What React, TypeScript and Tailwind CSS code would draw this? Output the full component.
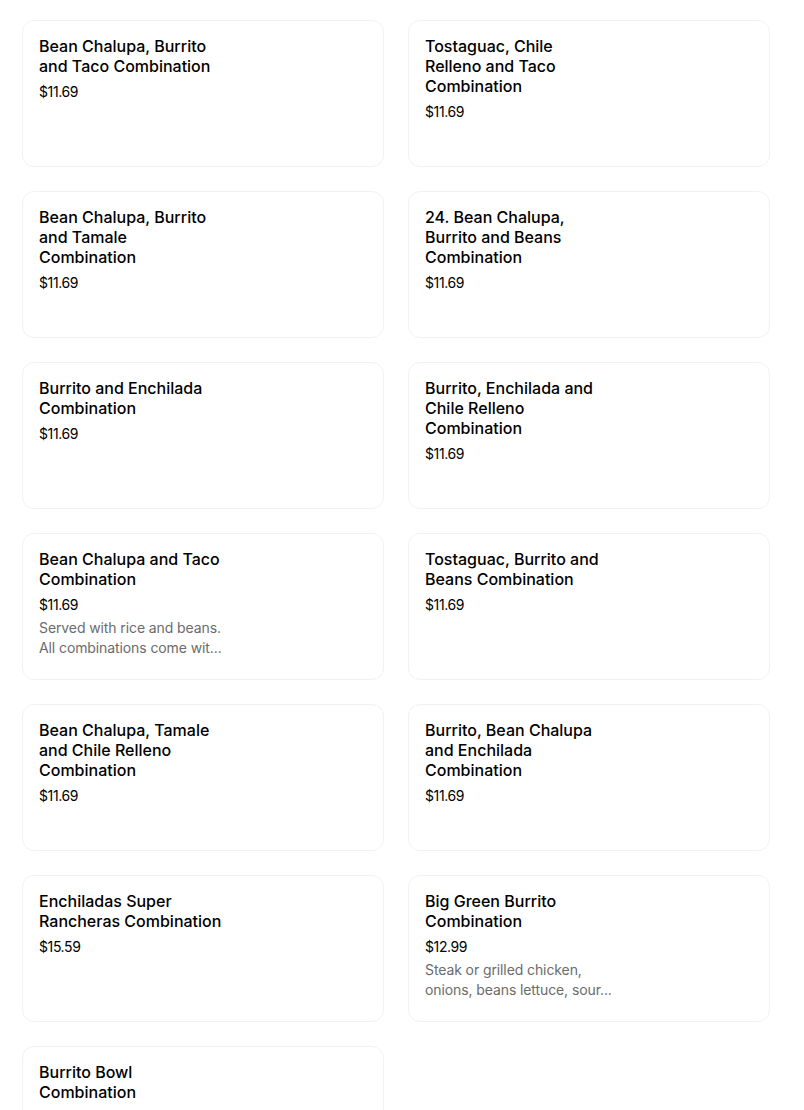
type Item = {
  lines: string[]
  price: string
  desc?: string[]
}

const items: Item[] = [
  { lines: ['Bean Chalupa, Burrito', 'and Taco Combination'], price: '$11.69' },
  { lines: ['Tostaguac, Chile', 'Relleno and Taco', 'Combination'], price: '$11.69' },
  { lines: ['Bean Chalupa, Burrito', 'and Tamale', 'Combination'], price: '$11.69' },
  { lines: ['24. Bean Chalupa,', 'Burrito and Beans', 'Combination'], price: '$11.69' },
  { lines: ['Burrito and Enchilada', 'Combination'], price: '$11.69' },
  { lines: ['Burrito, Enchilada and', 'Chile Relleno', 'Combination'], price: '$11.69' },
  {
    lines: ['Bean Chalupa and Taco', 'Combination'],
    price: '$11.69',
    desc: ['Served with rice and beans.', 'All combinations come wit...'],
  },
  { lines: ['Tostaguac, Burrito and', 'Beans Combination'], price: '$11.69' },
  { lines: ['Bean Chalupa, Tamale', 'and Chile Relleno', 'Combination'], price: '$11.69' },
  { lines: ['Burrito, Bean Chalupa', 'and Enchilada', 'Combination'], price: '$11.69' },
  { lines: ['Enchiladas Super', 'Rancheras Combination'], price: '$15.59' },
  {
    lines: ['Big Green Burrito', 'Combination'],
    price: '$12.99',
    desc: ['Steak or grilled chicken,', 'onions, beans lettuce, sour...'],
  },
  { lines: ['Burrito Bowl', 'Combination'], price: '$11.69' },
]

function MenuCard({ item }: { item: Item }) {
  return (
    <div className="h-[147px] rounded-xl border border-[#f2f2f2] bg-white px-4 pt-[15px]">
      <div className="w-[200px]">
        <div className="text-[16px] leading-5 font-medium text-black">
          {item.lines.map((l, i) => (
            <div key={i} className="whitespace-nowrap">
              {l}
            </div>
          ))}
        </div>
        <div className="mt-[6px] text-[14px] leading-5 tracking-[-0.4px] text-black">{item.price}</div>
        {item.desc && (
          <div className="mt-[3px] text-[14px] leading-5 tracking-[-0.1px] text-[#6b6b6b]">
            {item.desc.map((d, i) => (
              <div key={i} className="whitespace-nowrap">
                {d}
              </div>
            ))}
          </div>
        )}
      </div>
    </div>
  )
}

export default function App() {
  return (
    <div
      className="min-h-screen bg-white pl-[22px] pt-5"
      style={{ fontFamily: 'Inter, "Noto Sans", sans-serif' }}
    >
      <div className="grid w-[748px] grid-cols-2 gap-6">
        {items.map((it, i) => (
          <MenuCard key={i} item={it} />
        ))}
      </div>
    </div>
  )
}
